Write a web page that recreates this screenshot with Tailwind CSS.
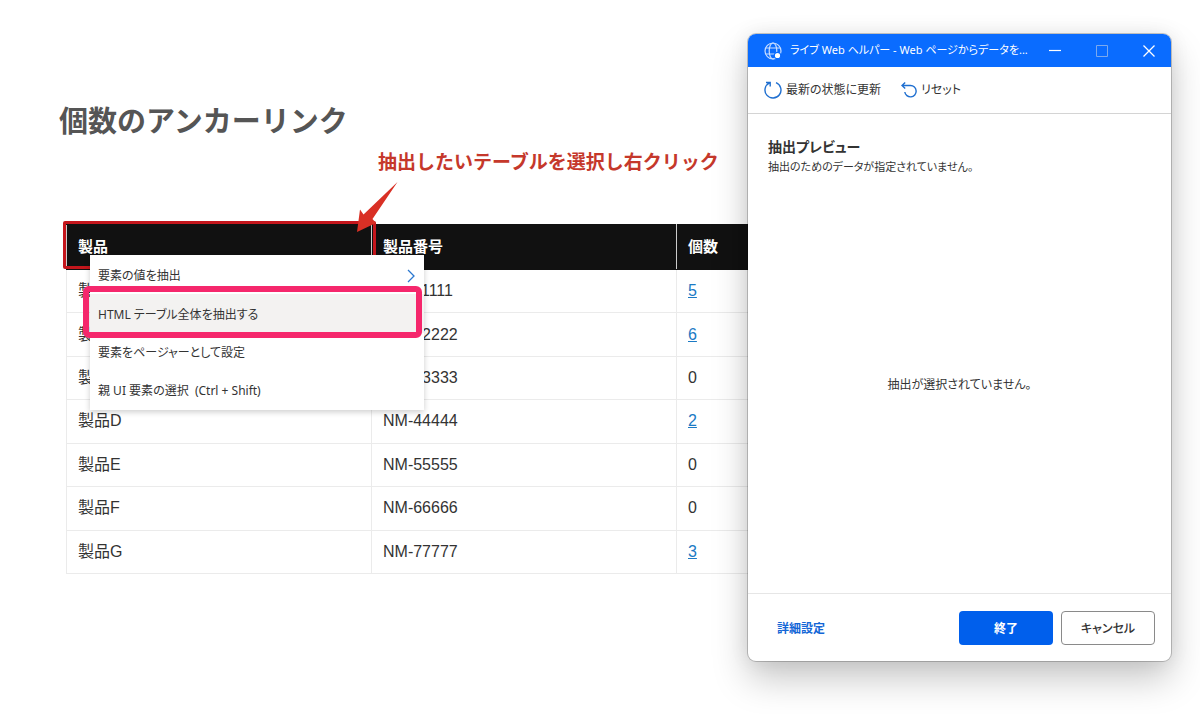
<!DOCTYPE html>
<html lang="ja">
<head>
  <meta charset="UTF-8" />
  <meta name="viewport" content="width=device-width, initial-scale=1" />
  <title>個数のアンカーリンク</title>
  <script src="https://cdn.jsdelivr.net/npm/@tailwindcss/browser@4"></script>
</head>
<body class="relative min-h-screen overflow-hidden bg-white text-[#333] font-['Liberation_Sans','Noto_Sans_CJK_JP',sans-serif]">

  <main class="pl-[66px] pr-[218px] pt-[102px]">
    <h1 class="-ml-[7px] text-[29px] leading-10 font-bold text-[#555]">個数のアンカーリンク</h1>
    <p class="mt-[7px] ml-[312px] text-[19px] leading-7 font-bold text-[#c5382b]">抽出したいテーブルを選択し右クリック</p>

    <div class="relative mt-[47px]">
      <table class="w-full h-[350px] table-fixed border-collapse text-base leading-6 text-left">
        <thead>
          <tr class="h-[45px] bg-[#111] text-[15px] text-white">
            <th class="border border-[#ccc] border-y-[#111] px-[11px]">製品</th>
            <th class="border border-[#ccc] border-y-[#111] px-[11px]">製品番号</th>
            <th class="border border-[#ccc] border-y-[#111] px-[11px]">個数</th>
          </tr>
        </thead>
        <tbody>
          <tr>
            <td class="border border-[#ebebeb] px-[11px]">製品A</td>
            <td class="border border-[#ebebeb] px-[11px]">NM-11111</td>
            <td class="border border-[#ebebeb] px-[11px]"><a href="#" class="text-[#1b7ac4] underline">5</a></td>
          </tr>
          <tr>
            <td class="border border-[#ebebeb] px-[11px]">製品B</td>
            <td class="border border-[#ebebeb] px-[11px]">NM-22222</td>
            <td class="border border-[#ebebeb] px-[11px]"><a href="#" class="text-[#1b7ac4] underline">6</a></td>
          </tr>
          <tr>
            <td class="border border-[#ebebeb] px-[11px]">製品C</td>
            <td class="border border-[#ebebeb] px-[11px]">NM-33333</td>
            <td class="border border-[#ebebeb] px-[11px]">0</td>
          </tr>
          <tr>
            <td class="border border-[#ebebeb] px-[11px]">製品D</td>
            <td class="border border-[#ebebeb] px-[11px]">NM-44444</td>
            <td class="border border-[#ebebeb] px-[11px]"><a href="#" class="text-[#1b7ac4] underline">2</a></td>
          </tr>
          <tr>
            <td class="border border-[#ebebeb] px-[11px]">製品E</td>
            <td class="border border-[#ebebeb] px-[11px]">NM-55555</td>
            <td class="border border-[#ebebeb] px-[11px]">0</td>
          </tr>
          <tr>
            <td class="border border-[#ebebeb] px-[11px]">製品F</td>
            <td class="border border-[#ebebeb] px-[11px]">NM-66666</td>
            <td class="border border-[#ebebeb] px-[11px]">0</td>
          </tr>
          <tr>
            <td class="border border-[#ebebeb] px-[11px]">製品G</td>
            <td class="border border-[#ebebeb] px-[11px]">NM-77777</td>
            <td class="border border-[#ebebeb] px-[11px]"><a href="#" class="text-[#1b7ac4] underline">3</a></td>
          </tr>
        </tbody>
      </table>

      <!-- selected cell -->
      <div class="absolute -left-[3px] -top-[3px] w-[313px] h-12 rounded-xs border-3 border-[#c4161c]"></div>

      <!-- arrow -->
      <svg class="absolute left-[290px] -top-[42px]" width="42" height="52" viewBox="0 0 42 52" fill="#d93025">
        <path d="M41.5 0 16.5 37 20 41 1 50 4 27.500 7.500 32.500Z" />
      </svg>

      <!-- context menu -->
      <div class="absolute left-6 top-[31px] w-[334px] bg-white pt-px pb-px shadow-[0_2px_6px_rgba(0,0,0,0.2)] text-xs text-[#333] font-['Noto_Sans','Noto_Sans_CJK_JP',sans-serif] [font-feature-settings:'palt']">
        <button type="button" class="flex h-[38px] w-full items-center justify-between pl-2 pr-[9px] pt-0.5 text-left">
          要素の値を抽出
          <svg width="8" height="14" viewBox="0 0 8 14" fill="none" stroke="#2b78d0" stroke-width="1.300"><path d="M1 1l6 6-6 6" /></svg>
        </button>
        <button type="button" class="block h-[39px] w-full bg-[#f3f2f1] px-2 pt-0.5 text-left">HTML テーブル全体を抽出する</button>
        <button type="button" class="block h-[38px] w-full px-2 pt-0.5 text-left">要素をページャーとして設定</button>
        <button type="button" class="block h-[38px] w-full px-2 pt-0.5 text-left">親 UI 要素の選択&nbsp; (Ctrl + Shift)</button>
        <div class="pointer-events-none absolute -left-[7px] top-[31px] h-[52px] w-[339px] rounded-md border-6 border-[#f5276c]"></div>
      </div>
    </div>
  </main>

  <!-- helper window -->
  <section class="absolute right-[29px] top-[34px] flex h-[627px] w-[423px] flex-col rounded-lg bg-white text-xs text-[#333] shadow-[0_0_0_1px_rgba(0,0,0,0.2),0_0_20px_rgba(0,0,0,0.08),0_18px_36px_rgba(0,0,0,0.22)] font-['Noto_Sans','Noto_Sans_CJK_JP',sans-serif] [font-feature-settings:'palt']">
    <header class="flex h-[33px] items-center rounded-t-lg bg-[#0a6cff] pl-4 pr-4 text-white">
      <svg width="18" height="18" viewBox="0 0 18 18" fill="none" stroke="#c9deff" stroke-width="1.200">
        <circle cx="9" cy="9" r="8" />
        <ellipse cx="9" cy="9" rx="3.800" ry="8" />
        <path d="M1.800 6h14.400M1.800 12h14.400" />
        <circle cx="13.500" cy="13.500" r="3.200" fill="#fff" stroke="#0a6cff" />
      </svg>
      <h2 class="ml-2 flex-1 whitespace-nowrap text-[11px]">ライブ Web ヘルパー - Web ページからデータを...</h2>
      <button type="button" aria-label="最小化"><svg width="12" height="12" viewBox="0 0 12 12" stroke="#fff" stroke-width="1.200"><path d="M0 5.500h12" /></svg></button>
      <button type="button" aria-label="最大化" class="ml-[35px]" disabled><svg width="12" height="12" viewBox="0 0 12 12" fill="none" stroke="#7ba9ee"><path d="M.5.5h11v11H.5z" /></svg></button>
      <button type="button" aria-label="閉じる" class="ml-[35px]"><svg width="12" height="12" viewBox="0 0 12 12" stroke="#fff" stroke-width="1.300"><path d="M.5.500l11 11M11.500.500l-11 11" /></svg></button>
    </header>

    <div class="flex h-[47px] items-center gap-5 border-b border-[#d4d4d4] px-4">
      <button type="button" class="flex items-center gap-1">
        <svg width="18" height="18" viewBox="0 0 18 18" fill="none" stroke="#1f6fd0" stroke-width="1.400">
          <path d="M12 1.600A8 8 0 1 1 5.500 1.800M2 1.500h4.200v4" />
        </svg>
        最新の状態に更新
      </button>
      <button type="button" class="flex items-center gap-1">
        <svg width="16" height="16" viewBox="0 0 16 16" fill="none" stroke="#1f6fd0" stroke-width="1.400">
          <path d="M4.200 .500 1 3.500l3.200 3M1 3.500h8.500a5.700 5.700 0 1 1-5.700 6.500" />
        </svg>
        リセット
      </button>
    </div>

    <div class="flex flex-1 flex-col px-5 pt-[23px]">
      <h3 class="text-sm leading-5 font-bold text-[#333]">抽出プレビュー</h3>
      <p class="text-[11px] leading-5">抽出のためのデータが指定されていません。</p>
      <p class="mt-[200px] text-center">抽出が選択されていません。</p>
    </div>

    <footer class="flex h-[68px] items-center gap-2 border-t border-[#e6e6e6] pl-[29px] pr-4">
      <a href="#" class="mr-auto pt-0.5 font-bold text-[#1266d6]">詳細設定</a>
      <button type="button" class="h-[34px] w-[94px] rounded-sm bg-[#005fec] pt-0.5 font-bold text-white">終了</button>
      <button type="button" class="h-[34px] w-[94px] rounded-sm border border-[#8a8a8a] pt-0.5 font-medium">キャンセル</button>
    </footer>
  </section>

</body>
</html>
